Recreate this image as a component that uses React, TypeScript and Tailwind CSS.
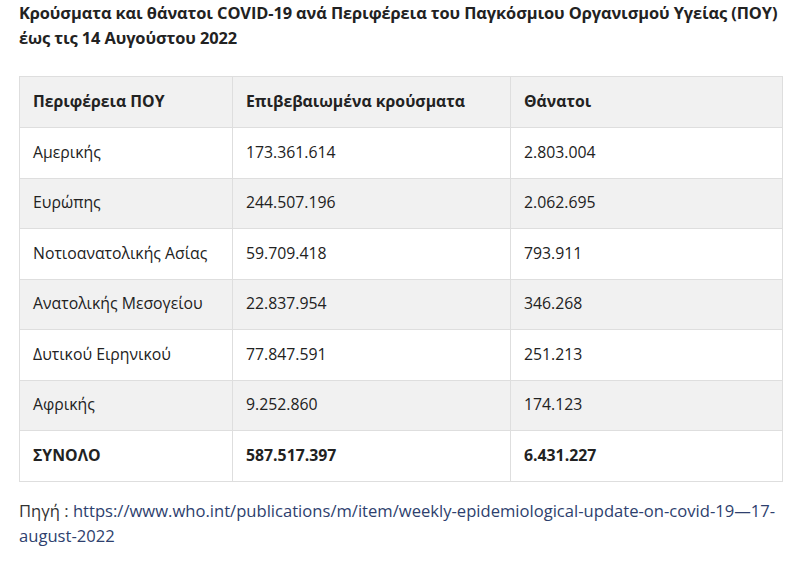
import React from "react";

const rows = [
  ["Αμερικής", "173.361.614", "2.803.004"],
  ["Ευρώπης", "244.507.196", "2.062.695"],
  ["Νοτιοανατολικής Ασίας", "59.709.418", "793.911"],
  ["Ανατολικής Μεσογείου", "22.837.954", "346.268"],
  ["Δυτικού Ειρηνικού", "77.847.591", "251.213"],
  ["Αφρικής", "9.252.860", "174.123"],
];

export default function App() {
  return (
    <div className="bg-white w-[799px] h-[585px] pl-[19px] text-[#222222]" style={{ fontFamily: "'Open Sans', 'Noto Sans', sans-serif" }}>
      <div className="w-[763px]">
        <h2 className="font-bold text-[16.4px] leading-[25px] pt-0 tracking-[-0.1px] whitespace-nowrap">
          Κρούσματα και θάνατοι COVID-19 ανά Περιφέρεια του Παγκόσμιου Οργανισμού Υγείας (ΠΟΥ)
          <br />
          έως τις 14 Αυγούστου 2022
        </h2>
        <table className="mt-[26px] w-[763px] border-collapse text-[15.8px] table-fixed">
          <colgroup>
            <col className="w-[213px]" />
            <col className="w-[278px]" />
            <col className="w-[272px]" />
          </colgroup>
          <thead>
            <tr className="bg-[#f1f1f1] h-[51px]">
              <th className="border border-[#dedede] text-left font-bold pl-[13px]">Περιφέρεια ΠΟΥ</th>
              <th className="border border-[#dedede] text-left font-bold pl-[13px]">Επιβεβαιωμένα κρούσματα</th>
              <th className="border border-[#dedede] text-left font-bold pl-[13px]">Θάνατοι</th>
            </tr>
          </thead>
          <tbody>
            {rows.map((r, i) => (
              <tr key={i} className={i % 2 === 1 ? "bg-[#f1f1f1] h-[50.5px]" : "bg-white h-[50.5px]"}>
                <td className="border border-[#dedede] pl-[13px]">{r[0]}</td>
                <td className="border border-[#dedede] pl-[13px]">{r[1]}</td>
                <td className="border border-[#dedede] pl-[13px]">{r[2]}</td>
              </tr>
            ))}
            <tr className="bg-white h-[51px] font-bold">
              <td className="border border-[#dedede] pl-[13px]">ΣΥΝΟΛΟ</td>
              <td className="border border-[#dedede] pl-[13px]">587.517.397</td>
              <td className="border border-[#dedede] pl-[13px]">6.431.227</td>
            </tr>
          </tbody>
        </table>
        <p className="mt-[16px] text-[16.6px] leading-[25px] text-[#333333] whitespace-nowrap">
          Πηγή :{" "}
          <a className="text-[#2e3f6e]" href="#">
            https://www.who.int/publications/m/item/weekly-epidemiological-update-on-covid-19—17-
            <br />
            august-2022
          </a>
        </p>
      </div>
    </div>
  );
}
